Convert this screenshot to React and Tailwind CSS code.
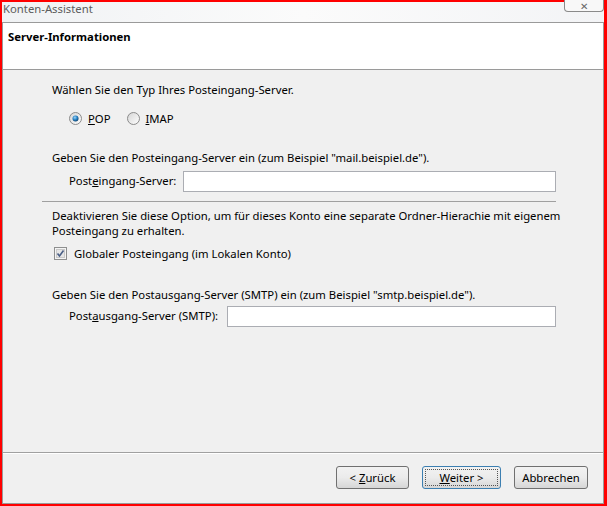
import React from 'react';

const font = { fontFamily: '"Noto Sans", "Open Sans", sans-serif' };

const Radio = ({ checked }) => (
  <svg width="13" height="13" viewBox="0 0 13 13" className="shrink-0">
    <defs>
      <linearGradient id={checked ? 'rg1' : 'rg0'} x1="0" y1="0" x2="1" y2="1">
        <stop offset="0" stopColor="#d4d4d4" />
        <stop offset="1" stopColor="#ffffff" />
      </linearGradient>
      <radialGradient id="dot" cx="0.4" cy="0.35" r="0.7">
        <stop offset="0" stopColor="#9fd3f5" />
        <stop offset="0.5" stopColor="#2a86c9" />
        <stop offset="1" stopColor="#0d3d66" />
      </radialGradient>
    </defs>
    <circle cx="6.5" cy="6.5" r="6" fill={`url(#${checked ? 'rg1' : 'rg0'})`} stroke="#8a8a8a" />
    {checked && <circle cx="6.5" cy="6.5" r="3" fill="url(#dot)" />}
  </svg>
);

const Checkbox = () => (
  <svg width="13" height="13" viewBox="0 0 13 13" className="shrink-0">
    <rect x="0.5" y="0.5" width="12" height="12" fill="#f4f4f4" stroke="#8e8f8f" />
    <rect x="2.5" y="2.5" width="8" height="8" fill="#e6e6e6" stroke="#c9c9c9" />
    <path d="M3.5 6.5 L5.5 9 L9.5 3.5" fill="none" stroke="#4a5f86" strokeWidth="1.6" />
  </svg>
);

const Button = ({ children, primary }) => (
  <button
    className={`h-[23px] rounded-[3px] border bg-gradient-to-b from-[#f2f2f2] via-[#ebebeb] to-[#d6d6d6] text-[11.3px] leading-[15px] text-black ${
      primary ? 'border-[#3c7fb1] p-[2px]' : 'border-[#707070]'
    }`}
  >
    {primary ? (
      <span className="flex h-full w-full items-center justify-center border border-dotted border-[#555]">
        {children}
      </span>
    ) : (
      children
    )}
  </button>
);

export default function App() {
  return (
    <div
      className="flex h-[506px] w-[607px] flex-col border-t-2 border-b-2 border-l-2 border-r-[3px] border-[#ff0000] bg-[#f4f6f8]"
      style={font}
    >
      {/* title bar */}
      <div className="relative h-[20px] bg-gradient-to-r from-[#f0f2f4] via-[#fbfbfb] to-[#f3f4f6] pl-[1px] text-[11.3px] leading-[14px]">
        <span className="text-[#5c5c5c]">Konten-Assistent</span>
        <div className="absolute right-0 top-[-2px] flex h-[12px] w-[40px] items-end justify-center rounded-b-[4px] border border-t-0 border-[#8a8a8a] bg-[#f8f8f8] text-[10px] leading-none text-[#666]">
          ✕
        </div>
      </div>

      {/* frame */}
      <div className="flex flex-1 flex-col border border-[#9a9a9a]">
        <div className="h-[47px] border-b border-[#9a9a9a] bg-white pl-[5px] pt-[6px] text-[11.3px] leading-[15px]">
          <span className="font-bold text-black">Server-Informationen</span>
        </div>

        <div className="flex flex-1 flex-col whitespace-nowrap bg-[#f0f0f0] text-[11.3px] text-black">
          <div className="flex-1 pl-[49px] pr-[47px] pt-[12px]">
            <div className="leading-[15px]">Wählen Sie den Typ Ihres Posteingang-Server.</div>
            <div className="mt-[14px] flex items-center pl-[17px] leading-[15px]">
              <Radio checked />
              <span className="ml-[6px]"><u>P</u>OP</span>
              <span className="ml-[16px]"><Radio /></span>
              <span className="ml-[6px]"><u>I</u>MAP</span>
            </div>

            <div className="mt-[24px] leading-[15px]">
              Geben Sie den Posteingang-Server ein (zum Beispiel "mail.beispiel.de").
            </div>
            <div className="mt-[6px] flex items-center pl-[17px]">
              <span className="w-[114px]">Post<u>e</u>ingang-Server:</span>
              <input className="h-[21px] flex-1 border border-[#abadb3] bg-white outline-none" />
            </div>

            <div className="-ml-[10px] mt-[9px] border-t border-[#a0a0a0]" />

            <div className="mt-[6px] leading-[15px]">
              Deaktivieren Sie diese Option, um für dieses Konto eine separate Ordner-Hierachie mit eigenem
              <br />
              Posteingang zu erhalten.
            </div>
            <div className="mt-[8px] flex items-center pl-[2px] leading-[15px]">
              <Checkbox />
              <span className="ml-[7px]">Globaler Posteingang (im Lokalen Konto)</span>
            </div>

            <div className="mt-[26px] leading-[15px]">
              Geben Sie den Postausgang-Server (SMTP) ein (zum Beispiel "smtp.beispiel.de").
            </div>
            <div className="mt-[4px] flex items-center pl-[17px]">
              <span className="w-[158px]">Post<u>a</u>usgang-Server (SMTP):</span>
              <input className="h-[21px] flex-1 border border-[#abadb3] bg-white outline-none" />
            </div>
          </div>

          <div className="border-t border-[#a0a0a0] shadow-[inset_0_1px_0_#ffffff]">
            <div className="flex h-[50px] items-start justify-end gap-[13px] pr-[15px] pt-[13px]">
              <span className="w-[73px]"><Button><span className="block w-[71px]">&lt; <u>Z</u>urück</span></Button></span>
              <span className="w-[79px]"><Button primary><span className="block w-[71px]"><u>W</u>eiter &gt;</span></Button></span>
              <span className="w-[74px]"><Button><span className="block w-[72px]">Abbrechen</span></Button></span>
            </div>
          </div>
        </div>
      </div>
    </div>
  );
}
